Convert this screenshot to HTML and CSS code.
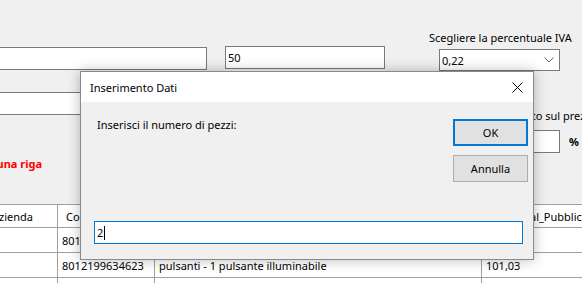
FILE: index.html
```html
<!DOCTYPE html>
<html lang="it">
<head>
<meta charset="utf-8">
<title>Inserimento Dati</title>
<link rel="stylesheet" href="styles.css">
</head>
<body>
<div class="form">
  <div class="row-top">
    <div class="field field-a"></div>
    <div class="field field-b">50</div>
    <div class="iva">
      <div class="iva-label">Scegliere la percentuale IVA</div>
      <div class="combo">
        <span>0,22</span>
        <svg class="chev" width="10" height="6" viewBox="0 0 10 6"><path d="M0.5 0.5 L5 5 L9.5 0.5" fill="none" stroke="#606060" stroke-width="1"/></svg>
      </div>
    </div>
  </div>
  <div class="row-mid">
    <div class="left-col">
      <div class="field field-c"></div>
      <div class="red-wrap"><span class="red">Selezionare una riga</span></div>
    </div>
    <div class="sconto">
      <div class="sconto-label">Sconto sul prezzo</div>
      <div class="sconto-line">
        <div class="field field-d"></div>
        <span class="pct">%</span>
      </div>
    </div>
  </div>
  <div class="grid">
    <div class="cell head c1">Azienda</div>
    <div class="cell head c2">Codice</div>
    <div class="cell head c3">Descrizione</div>
    <div class="cell head c4">Total_Pubblico</div>
    <div class="cell c1"></div>
    <div class="cell c2">8012199634616</div>
    <div class="cell c3">pulsanti - 1 pulsante</div>
    <div class="cell c4"></div>
    <div class="cell c1"></div>
    <div class="cell c2">8012199634623</div>
    <div class="cell c3">pulsanti - 1 pulsante illuminabile</div>
    <div class="cell c4">101,03</div>
    <div class="cell c1"></div>
    <div class="cell c2"></div>
    <div class="cell c3"></div>
    <div class="cell c4"></div>
  </div>
</div>

<div class="dialog">
  <div class="titlebar">
    <span class="title">Inserimento Dati</span>
    <svg class="close" width="11" height="11" viewBox="0 0 11 11"><path d="M0.5 0.5 L10.5 10.5 M10.5 0.5 L0.5 10.5" stroke="#000" stroke-width="1"/></svg>
  </div>
  <div class="dbody">
    <div class="drow">
      <div class="msg">Inserisci il numero di pezzi:</div>
      <div class="buttons">
        <div class="btn btn-ok">OK</div>
        <div class="btn">Annulla</div>
      </div>
    </div>
    <div class="dinput"><span>2</span><span class="caret"></span></div>
  </div>
</div>
</body>
</html>
```
FILE: styles.css
```css
* { box-sizing: border-box; }
html, body {
  margin: 0;
  padding: 0;
}
body {
  width: 582px;
  height: 283px;
  overflow: hidden;
  background: #f0f0f0;
  font-family: "Noto Sans", "Open Sans", sans-serif;
  font-size: 11px;
  color: #000;
  position: relative;
}
.form {
  width: 582px;
}
.field {
  background: #fff;
  border: 1px solid #7a7a7a;
  height: 23px;
  line-height: 21px;
  padding-left: 2px;
  flex-shrink: 0;
}
.row-top {
  display: flex;
  align-items: flex-start;
  height: 71px;
}
.field-a {
  margin-left: -10px;
  margin-top: 47px;
  width: 217px;
}
.field-b {
  margin-left: 18px;
  margin-top: 46px;
  width: 160px;
}
.iva {
  margin-left: 44px;
  margin-top: 30px;
}
.iva-label {
  height: 19px;
  line-height: 16px;
  white-space: nowrap;
}
.combo {
  margin-left: 10px;
  width: 121px;
  height: 22px;
  background: #fff;
  border: 1px solid #7a7a7a;
  display: flex;
  align-items: center;
  justify-content: space-between;
  padding: 0 5px 0 2px;
}
.chev { display: block; }
.row-mid {
  display: flex;
  height: 112px;
  margin-top: 21px;
}
.left-col {
  width: 300px;
  flex-shrink: 0;
}
.field-c {
  margin-left: -10px;
  width: 300px;
}
.red-wrap {
  width: 42px;
  display: flex;
  justify-content: flex-end;
  white-space: nowrap;
  margin-top: 41px;
}
.red {
  color: #ff0000;
  font-weight: bold;
}
.sconto {
  margin-left: 207px;
  margin-top: 16px;
  flex-shrink: 0;
}
.sconto-label {
  white-space: nowrap;
  height: 22px;
  line-height: 16px;
}
.sconto-line {
  display: flex;
  align-items: center;
  white-space: nowrap;
}
.field-d {
  width: 60px;
  height: 23px;
  margin-left: -7px;
}
.pct {
  margin-left: 9px;
  font-weight: bold;
}
.grid {
  display: grid;
  grid-template-columns: 67px 97px 327px 200px;
  grid-template-rows: 23px 25px 25px 25px;
  margin-left: -9px;
  background: #fff;
  border-top: 1px solid #a0a0a0;
}
.cell {
  border-right: 1px solid #a0a0a0;
  border-bottom: 1px solid #a0a0a0;
  white-space: nowrap;
  overflow: hidden;
  display: flex;
  align-items: center;
  padding-left: 4px;
}
.head { padding-left: 8px; }
.c1.head { padding-left: 1px; }
.c4.head { padding-left: 32px; }

.dialog {
  position: absolute;
  left: 80px;
  top: 71px;
  width: 454px;
  height: 189px;
  border: 1px solid #8a8a8a;
  background: #f0f0f0;
  box-shadow: 0 0 12px rgba(0,0,0,0.28);
  display: flex;
  flex-direction: column;
}
.titlebar {
  height: 30px;
  background: #fff;
  display: flex;
  align-items: center;
  justify-content: space-between;
  padding: 0 10px 0 9px;
}
.close { display: block; }
.dbody {
  flex: 1;
  padding: 17px 5px 0 13px;
}
.drow {
  display: flex;
  justify-content: space-between;
  height: 102px;
}
.msg {
  margin-left: 3px;
  line-height: 14px;
  margin-top: -1px;
}
.buttons {
  display: flex;
  flex-direction: column;
  gap: 9px;
}
.btn {
  width: 75px;
  height: 27px;
  background: #e1e1e1;
  border: 1px solid #adadad;
  display: flex;
  align-items: center;
  justify-content: center;
}
.btn-ok {
  border: 2px solid #0078d7;
}
.dinput {
  width: 429px;
  height: 23px;
  background: #fff;
  border: 1px solid #0078d7;
  display: flex;
  align-items: center;
  padding-left: 2px;
}
.caret {
  width: 1px;
  height: 14px;
  background: #000;
  margin-left: 1px;
}
```
